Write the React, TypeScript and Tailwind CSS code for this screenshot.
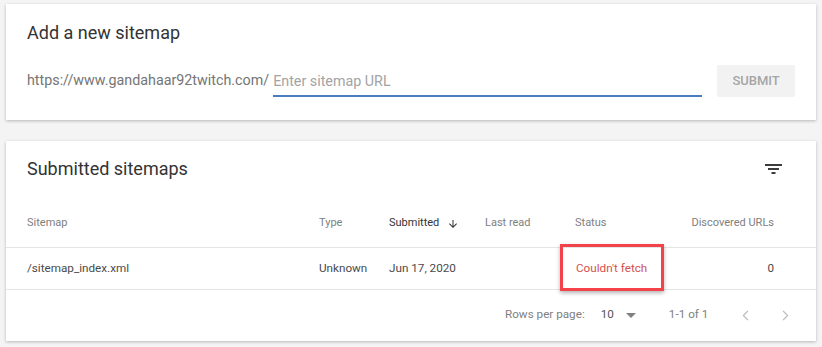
import { ChevronLeft, ChevronRight } from "lucide-react";

const FilterIcon = () => (
  <svg width="17" height="10" viewBox="0 0 17 10" fill="#3c3c3c">
    <rect x="0" y="0" width="17" height="2" />
    <rect x="3" y="4" width="11" height="2" />
    <rect x="6.5" y="8" width="4" height="2" />
  </svg>
);

const ArrowDown = () => (
  <svg width="12" height="12" viewBox="0 0 24 24" fill="#333">
    <path d="M20 12l-1.41-1.41L13 16.17V4h-2v12.17l-5.58-5.59L4 12l8 8 8-8z" />
  </svg>
);

export default function App() {
  return (
    <div className="min-h-[347px] w-[822px] bg-[#f4f4f4] pt-1 pl-[6px] font-['Roboto',sans-serif]">
      <div className="flex w-[810px] flex-col gap-[21px]">
        {/* add sitemap card */}
        <div className="h-[116px] bg-white px-[21px] pt-[19px] shadow-[0_1px_3px_rgba(0,0,0,0.25)]">
          <h2 className="text-[18px] leading-5 text-[#333]">Add a new sitemap</h2>
          <div className="mt-[22px] flex items-center">
            <span className="text-[14.3px] text-[#757575]">https://www.gandahaar92twitch.com/</span>
            <div className="ml-[4px] flex h-[31px] w-[430px] items-center border-b-2 border-[#4a7cc0]">
              <span className="pt-[3px] text-[14.3px] text-[#a3a3a3]">Enter sitemap URL</span>
            </div>
            <button className="ml-[15px] h-[32px] w-[78px] rounded-[2px] bg-[#f2f2f2] text-[13px] font-medium text-[#a5a5a5]">
              SUBMIT
            </button>
          </div>
        </div>

        {/* submitted card */}
        <div className="h-[200px] bg-white shadow-[0_1px_3px_rgba(0,0,0,0.25)]">
          <div className="flex items-center justify-between pl-[21px] pr-[34px] pt-[18px]">
            <h2 className="text-[18px] leading-5 text-[#333]">Submitted sitemaps</h2>
            <FilterIcon />
          </div>

          <div className="mt-[30px] grid h-[39px] grid-cols-[292px_70px_96px_90px_1fr_auto] items-center border-b border-[#e5e5e5] pb-[9px] pl-[21px] pr-[42px] text-[11px] text-[#808080]">
            <span>Sitemap</span>
            <span>Type</span>
            <span className="flex items-center gap-[8px] text-[#333]">
              Submitted <ArrowDown />
            </span>
            <span>Last read</span>
            <span>Status</span>
            <span>Discovered URLs</span>
          </div>

          <div className="grid h-[42px] grid-cols-[292px_70px_96px_90px_1fr_auto] items-center border-b border-[#e5e5e5] pl-[21px] pr-[42px] text-[11.7px] text-[#4a4a4a]">
            <span>/sitemap_index.xml</span>
            <span>Unknown</span>
            <span>Jun 17, 2020</span>
            <span></span>
            <span className="relative pl-[1px] text-[#d3504c]">
              Couldn't fetch
              <span className="absolute left-[-15px] top-[-16px] h-[47px] w-[104px] border-[3px] border-[#f2434a] shadow-[0_2px_4px_rgba(0,0,0,0.3)]" />
            </span>
            <span className="text-right">0</span>
          </div>

          <div className="flex h-[50px] items-center pl-[499px] text-[11.7px] text-[#808080]">
            <span>Rows per page:</span>
            <span className="ml-[16px] text-[#555]">10</span>
            <svg className="ml-[12px]" width="10" height="5" viewBox="0 0 10 5" fill="#808080">
              <path d="M0 0h10L5 5z" />
            </svg>
            <span className="ml-[33px]">1-1 of 1</span>
            <ChevronLeft className="ml-[29px]" size={17} color="#bbb" strokeWidth={1.5} />
            <ChevronRight className="ml-[23px]" size={17} color="#bbb" strokeWidth={1.5} />
          </div>
        </div>
      </div>
    </div>
  );
}
